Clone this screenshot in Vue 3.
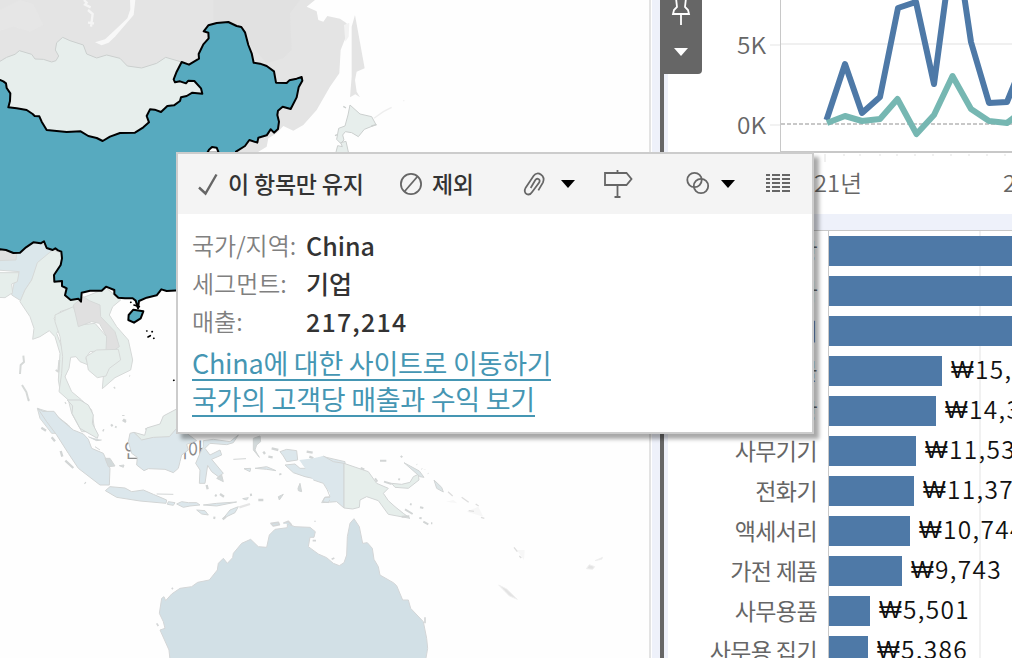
<script setup>
const rows = [
  { name: '책장', w: 220, value: '' },
  { name: '의자', w: 220, value: '' },
  { name: '복사기', w: 220, value: '' },
  { name: '테이블', w: 113, value: '15,247' },
  { name: '포장', w: 107, value: '14,312' },
  { name: '사무기기', w: 87, value: '11,532' },
  { name: '전화기', w: 85, value: '11,374' },
  { name: '액세서리', w: 81, value: '10,744' },
  { name: '가전 제품', w: 73, value: '9,743' },
  { name: '사무용품', w: 41, value: '5,501' },
  { name: '사무용 집기', w: 39, value: '5,386' }
]
const details = [
  { key: '국가/지역:', val: 'China', cls: 'd1' },
  { key: '세그먼트:', val: '기업', cls: 'd2' },
  { key: '매출:', val: '217,214', cls: 'd3' }
]
</script>

<template>
  <main class="dashboard">
    <section class="map">
      <svg width="649" height="658" viewBox="0 0 649 658">
        <!-- mainland and Sakhalin -->
        <g transform="scale(.33333)" fill="#e4e4e4">
          <path d="M0 0H945L920 20 950 34 955 60 970 65 982 48 1020 56 1040 70 1036 115 1022 150 1018 220 990 260 950 330 910 375 880 392 850 378 830 400 805 415 800 440 760 465 500 500 0 600Z" />
          <path d="M1065 45 1075 100 1094 205 1070 215 1065 240 1070 275 1080 292 1066 283 1050 292 1055 230 1055 80Z" />
          <path d="M1032 75 1048 68 1046 110 1036 125Z" fill="#f2f2f2" />
          <path d="M640 0H900L870 40 875 150 850 175 800 190 700 75 640 60Z" fill="#e1e1e1" />
          <path d="M60 0 100 12 130 75 90 95 40 80 0 92V30Z" fill="#e8e8e8" opacity=".6" />
          <path d="M390 0 406 0 401 45 345 110 326 128 305 136 285 127 315 118 345 90 382 55 391 28Z" fill="#f8f8f8" />
          <path d="M252 0 260 8 255 14 272 22M264 30 278 42 273 80M264 68 282 70" stroke="#f5f5f5" stroke-width="7" fill="none" />
          <path d="M1122 355 1150 335 1175 322M1210 302H1213" stroke="#eeeeee" stroke-width="4" fill="none" />
        </g>
        <!-- Mongolia and Japan -->
        <g transform="scale(.33333)" fill="#e7eeec" stroke="#cbcfce" stroke-width="3" stroke-linejoin="round">
          <path d="M-10 190 20 172 45 163 58 152 95 163 105 177 130 178 155 186 168 182 176 168 166 150 170 128 188 112 210 122 250 135 260 162 290 174 320 165 360 175 382 198 425 204 470 190 497 172 545 186 570 220 620 285 440 400 310 450 100 420 -10 270Z" />
          <path d="M1050 315 1080 342 1115 350 1128 374 1093 388 1075 410 1055 398 1036 395 1028 405 1032 420 1022 430 1010 418 1016 385 1035 378 1044 345Z" />
          <path d="M1013 437 1027 440 1022 428 1038 424 1046 460H1007Z" />
          <path d="M1030 319 1038 324M1005 407 1012 404M1114 378 1130 374" stroke-width="4" />
        </g>
        <!-- mainland South-East Asia -->
        <g transform="translate(0 210) scale(.33333)" stroke="#d6d9d8" stroke-width="3" stroke-linejoin="round" fill="#e6eeeb">
          <path d="M-10 130 50 130 105 95 165 115 168 135 115 160 95 210 75 240 62 272 35 255 45 205 58 185 -10 180Z" fill="#dbe7eb" />
          <path d="M-10 188 57 188 52 215 35 222 38 248 15 263 -10 262Z" />
          <path d="M-10 122 20 120 50 132 48 150 -10 152Z" fill="#e0e0e0" />
          <path d="M112 158 158 120 185 130 186 175 164 210 195 225 240 275 220 292 180 305 162 325 180 355 170 370 185 410 205 470 190 515 180 540 175 510 180 430 165 380 148 362 120 380 98 388 102 355 90 320 60 275 75 240 95 210Z" />
          <path d="M165 315 220 290 240 345 285 340 320 380 325 420 270 425 257 445 265 465 240 455 228 440 212 442 207 475 195 500 215 545 245 570 275 600 285 665H245L215 610 205 570 177 545 185 490 188 440 180 380 165 335Z" />
          <path d="M243 265 320 235 362 270 338 290 328 315 350 350 385 390 398 450 392 480 345 503 307 536 310 500 260 450 330 415 318 370 300 320Z" />
          <path d="M220 285 250 260 268 272 300 285 302 320 345 365 358 410 340 422 318 420 320 380 298 340 275 335 235 350Z" fill="#e0e0e0" />
          <path d="M258 440 290 420 355 418 362 450 328 475 318 498 292 503 265 480Z" />
          <path d="M112 595 160 610 205 645 225 670H155L120 625Z" fill="#dce7ec" />
          <path d="M435 657 480 645 495 620 515 618 530 595V665Z" />
          <path d="M70 437 72 456 62 465 60 492M66 525 79 546 86 572M178 450 175 485 167 480M388 497 390 498M342 535 345 532M370 628 378 632M345 650 350 652M195 580 198 578" stroke-width="6" fill="none" />
        </g>
        <!-- China -->
        <g transform="scale(.33333)" fill="#57aabf" stroke="#000" stroke-width="6" stroke-linejoin="round" stroke-linecap="round">
          <path d="M-20 238 0 240 10 244 18 250 20 264 31 280 30 303 25 322 50 325 80 330 98 342 104 348 118 349 125 365 140 390 200 396 242 394 265 408 290 414 308 423 330 410 360 399 405 398 430 382 447 367 440 348 450 328 464 329 483 336 502 318 522 316 540 303 543 292 560 288 577 278 607 281 603 265 583 243 565 242 558 250 540 244 525 247 521 238 530 215 545 186 567 194 597 176 596 162 610 133 626 115 625 98 611 94 625 76 650 69 685 66 710 78 724 81 735 97 745 135 755 160 761 188 780 191 800 198 822 214 828 248 860 249 868 241 890 236 905 231 907 242 896 262 890 292 872 327 848 320 834 332 832 345 837 365 834 387 822 398 812 388 800 406 775 413 772 428 748 420 735 438 708 455 750 700 540 871 500 873 484 868 470 886 440 893 417 903 414 925 407 902 398 895 375 895 355 893 343 882 343 870 318 860 305 872 270 872 245 878 243 905 235 896 212 900 195 886 200 865 186 858 186 843 163 845 162 825 182 795 186 775 184 755 174 751 166 745 158 750 140 744 132 724 122 730 100 727 78 742 60 758 40 759 18 750 0 748 -20 755Z" />
          <path d="M386 945 400 929 430 934 422 955 402 968 385 960Z" />
          <path d="M622 458 627 449 636 441 650 443 656 458Z" fill="#fff" />
          <path d="M440 993h1M456 995h1M444 1011 451 1007M461 1015h1M521 1141h1M392 907h1M402 915 418 920" stroke-width="5" fill="none" />
        </g>
        <text x="124" y="458" class="country" textLength="80" lengthAdjust="spacingAndGlyphs">인도네시아</text>
        <!-- Indonesia and Malaysia -->
        <g transform="translate(0 400) scale(.33333)" fill="#dce7ec" stroke="#d2d5d5" stroke-width="3" stroke-linejoin="round">
          <path d="M202 0 218 18 216 40 240 85 292 115 295 105 277 70 280 45 265 15 240 0Z" fill="#e6eeeb" />
          <path d="M113 25 128 34 162 34 178 55 220 90 250 102 265 118 275 145 310 160 330 205 328 255 300 255 235 205 205 160 170 105 140 65Z" />
          <path d="M316 272 330 260 375 264 395 275 430 270 460 283 500 300 498 310 420 303 350 292Z" />
          <path d="M390 100 402 97 425 118 460 110 508 108 530 75 560 100 590 122 560 133 565 150 545 165 540 185 535 205 520 218 495 208 445 206 432 212 410 195 412 172 395 160 385 125Z" />
          <path d="M402 97 434 106 440 84 480 72 490 48 530 27 530 85 508 110 460 112 425 120Z" fill="#e6eeeb" />
          <path d="M610 140 610 122 640 118 690 125 715 105 700 128 680 134 630 130 615 145 630 165 660 150 665 165 635 178 670 220 655 230 635 215 623 196 615 250H598L600 210 587 190 600 160Z" />
          <path d="M840 155 860 148 890 152 893 180 860 185 850 168Z" />
          <path d="M855 195 885 192 900 205 920 205 940 180 970 170 1035 185V310L1010 300 990 260 960 240 915 230 880 218Z" />
          <path d="M968 305 975 292 995 292 985 308Z" />
          <path d="M505 305 525 308 520 316 502 313ZM530 312 545 305 565 308 590 308 600 315 570 318 550 322ZM610 315 650 310 710 306 650 318ZM590 330 615 332 625 345 605 342ZM670 355 690 330 715 320 705 338 680 350ZM728 296 745 293 740 300ZM765 205 800 200 828 212 800 208ZM732 206 752 205 750 215ZM700 178 738 176" />
          <path d="M315 175 330 175 345 198 325 200ZM358 197 372 195 370 202ZM760 115 780 108 782 125 770 135 765 150 778 172 760 150ZM835 290 850 283 838 300ZM894 265 900 250 905 275 895 272ZM650 235 665 225 670 245ZM265 110 290 122 305 120M285 140 300 150M470 282 520 283" fill="#d3dadb" />
          <path d="M124 83 138 92M155 112 165 124M182 153 187 170M196 182 220 204M254 248 257 250M370 45V48M368 60 378 66M333 78 338 74M308 90 312 92M620 255 623 268M645 285 650 288M660 282 672 290M775 300H790M815 145 835 150M805 170 818 172M920 155 938 158M928 170 940 175M840 220 842 225M790 155 795 162M640 353 646 354M668 358 678 350M750 285 756 284M910 190 920 200M84 0H88" fill="none" stroke-width="7" />
          <path d="M718 322 750 312" stroke="#e5e5e5" stroke-width="7" />
        </g>
        <!-- Australia -->
        <g transform="translate(0 400) scale(.33333)" stroke="#d4d6d7" stroke-width="3" fill="#d2e0e6" stroke-linejoin="round">
          <path d="M510 780 507 750 480 690 495 685 490 665 478 640 485 595 492 590 497 602 515 582 540 565 575 560 593 547 628 540 652 510 655 490 670 475 682 490 698 473 700 460 725 430 752 418 775 440 800 442 808 405 825 388 862 383 862 372 885 380 930 382 946 395 942 412 930 412 925 440 955 462 980 473 1000 490 1018 497 1032 488 1040 465 1042 410 1050 370 1062 356 1078 380 1088 430 1102 428 1117 445 1122 478 1135 500 1140 525 1180 548 1190 557 1208 600 1225 600 1232 625 1270 665 1280 715 1283 745 1277 780Z" />
          <path d="M813 370 835 367 838 374 820 378ZM850 370 865 364 875 375M938 422 948 422M515 567 519 564M470 670 475 678M1275 652V670M995 478 1003 474M945 365V362" stroke-width="5" />
        </g>
        <!-- Papua New Guinea and Pacific islands -->
        <g transform="translate(320 400) scale(.33333)" stroke="#d2d5d5" stroke-width="3" stroke-linejoin="round">
          <path d="M-62 180-20 175 10 168 40 185 72 190V324L50 305 30 307 30 280 10 250-20 240Z" fill="#dce7ec" stroke="none" />
          <path d="M10 168 40 185 72 190V324L50 305 5 308 14 292 30 290 22 270 10 250-20 240" fill="none" />
          <path d="M72 190 145 215 170 250 205 265 190 280 205 302 225 320 250 340 270 355 205 343 175 302 140 290 120 300 118 322 98 327 72 324Z" fill="#e6eeeb" />
          <path d="M215 250 245 253 270 247 280 230 295 223 297 240 265 265 225 262Z" fill="#e6eeeb" />
          <path d="M342 240 365 262 370 276 350 265ZM252 188 298 213 312 232 300 230Z" fill="#dce5e7" />
          <path d="M180 182H199M242 168 247 172M290 193 291 194M305 206 306 207M314 207V208M324 220 325 221M165 235 172 245M192 245 215 252M235 237 240 239M255 328 278 342M270 312 275 314M300 322 310 324M298 354 305 355M310 365 325 373M333 370H337M122 204 133 208M245 350 268 349" fill="none" stroke-width="6" />
          <path d="M378 305 412 310 400 300ZM440 335 490 350 475 320ZM590 450 614 450 612 480ZM385 275 400 290Z" fill="#f7f7f7" stroke="none" />
          <path d="M536 555 560 567 592 598 568 588ZM799 506 808 494 824 500 818 508ZM825 482 848 472 845 478Z" fill="#e3e3e3" stroke="#f0f0f0" />
          <path d="M384 275 398 288M425 292 446 307M467 312 476 318M446 332 462 334M483 352 493 355M582 442 592 455M598 468 604 474" stroke="#dedede" stroke-width="4" />
        </g>
      </svg>
    </section>

    <div class="gutter"></div>
    <div class="selection"></div>

    <section class="charts">
      <svg class="trend" width="344" height="214" viewBox="668 0 344 214">
        <path d="M770 45H780" stroke="#f2f2f2" stroke-width="2" />
        <path d="M781 44H1012" stroke="#f0f0f0" stroke-width="2" />
        <path d="M770 125H780" stroke="#f2f2f2" stroke-width="2" />
        <path d="M781 124H1012" stroke="#c8c8c8" stroke-width="2" stroke-dasharray="4 2" />
        <path d="M780.5 0V152" stroke="#c8c8c8" />
        <path d="M780 152H1012" stroke="#c8c8c8" stroke-width="2" />
        <path d="M825 154V162M844 154v2M860 154v2M880 154v2M897 154v2M915 154v2M933 154v2M951 154v2M969 154v2M987 154v2M1005 154v2" stroke="#f0f0f0" stroke-width="2" />
        <path d="M826.500 120 845 64 862 113 880 97 898 8 916 2 934 84 948-20 961-25 971 42 989 103 1007 102 1020 70" class="line blue" />
        <path d="M827 123 845 116 862 121 880 119 897.5 99 916.5 134 934 115 952.500 76 971 109 989 121 1007 123 1020 113" class="line green" />
        <text x="737" y="54" class="axis" textLength="29" lengthAdjust="spacingAndGlyphs">5K</text>
        <text x="737" y="134" class="axis" textLength="29" lengthAdjust="spacingAndGlyphs">0K</text>
        <text x="788" y="192" class="axis" textLength="74" lengthAdjust="spacingAndGlyphs">2021년</text>
        <text x="1003" y="192" class="axis" textLength="74" lengthAdjust="spacingAndGlyphs">2022년</text>
      </svg>
      <div class="band"></div>
      <div class="bars">
        <div v-for="row in rows" :key="row.name" class="row">
          <span class="name">{{ row.name }}</span>
          <div class="plot">
            <i class="bar" :style="{ width: row.w + 'px' }"></i>
            <span v-if="row.value" class="value"><span class="won">₩</span>{{ row.value }}</span>
          </div>
        </div>
      </div>
    </section>

    <div class="tab">
      <svg width="42" height="74" viewBox="0 0 42 74" fill="none" stroke="#fff" stroke-width="1.8">
        <path d="M16-2 17 7 14 10 13 14H29L28 10 25 7 26-2M21 15V25" />
        <path d="M14 48H28L21 56Z" fill="#fff" stroke="none" />
      </svg>
    </div>

    <aside class="tooltip">
      <div class="toolbar">
        <svg class="ic check" width="24" height="28" viewBox="0 0 24 28"><path d="M3 17.500 9.500 23.500 20.500 4.500" stroke-width="2.4" /></svg>
        <span class="cmd keep">이 항목만 유지</span>
        <svg class="ic ban" width="24" height="28" viewBox="0 0 24 28"><circle cx="12" cy="14" r="10.100" /><path d="M5.500 21.500 18.500 6.500" /></svg>
        <span class="cmd drop">제외</span>
        <svg class="ic clip" width="24" height="28" viewBox="0 -3 72 84"><path d="M46 58 60 34C68 14 44-2 32 14L8 50C-2 68 18 78 28 62L49 34C53 24 42 20 37 27L23 51" stroke-width="5.200" /></svg>
        <svg class="caret" width="16" height="10" viewBox="0 0 16 10"><path d="M1 1H15L8 9Z" /></svg>
        <svg class="ic sign" width="30" height="30" viewBox="0 0 30 30"><path d="M2 4H23.500L28.500 10 23.500 16H2ZM14.500 1V4M14.500 16V28M11.500 28H17.500" /></svg>
        <svg class="ic sets" width="24" height="28" viewBox="0 0 24 28"><circle cx="8.500" cy="10" r="7.200" /><circle cx="15" cy="16" r="7.200" /></svg>
        <svg class="caret second" width="16" height="10" viewBox="0 0 16 10"><path d="M1 1H15L8 9Z" /></svg>
        <svg class="ic data" width="26" height="22" viewBox="0 0 26 22"><path d="M1 2H5M7 2H15M17 2H25M1 6H5M7 6H15M17 6H25M1 10H5M7 10H15M17 10H25M1 14H5M7 14H15M17 14H25M1 18H5M7 18H15M17 18H25" /></svg>
      </div>
      <div class="body">
        <div v-for="d in details" :key="d.key" class="detail" :class="d.cls">
          <span class="key">{{ d.key }}</span><b>{{ d.val }}</b>
        </div>
        <a class="link first">China에 대한 사이트로 이동하기</a>
        <a class="link">국가의 고객당 매출과 수익 보기</a>
      </div>
    </aside>
  </main>
</template>

<style>
body { background: #fff; }
</style>

<style scoped>
.dashboard {
  position: relative;
  display: flex;
  width: 1012px;
  height: 658px;
  overflow: hidden;
  background: #fff;
  font-family: "Noto Sans CJK KR", sans-serif;
}
.map { width: 649px; background: #fefefe; flex: none; }
.map svg { display: block; }
.country { font-size: 20px; fill: #8a8a8a; }
.gutter { width: 11px; box-sizing: border-box; border-left: 2px solid #e3e3e3; background: #eef1fa; box-shadow: inset 1px 0 #fff; flex: none; }
.selection { width: 4px; background: #666; border-right: 4px solid #eef1fa; flex: none; }
.charts { width: 344px; flex: none; display: flex; flex-direction: column; }
.trend { display: block; flex: none; }
.line { fill: none; stroke-width: 6; stroke-linejoin: round; stroke-linecap: butt; }
.blue { stroke: #4e79a7; }
.green { stroke: #76b7b2; }
.axis { font-size: 23px; fill: #666; font-weight: 350; }
.band { height: 16px; background: #eef1fa; flex: none; }
.bars {
  flex: none;
  height: 441px;
  border-top: 1px solid #c8c8c8;
  background: linear-gradient(#f1f1f1, #f1f1f1) 311px 0 / 2px 100% no-repeat,
    linear-gradient(#c8c8c8, #c8c8c8) 160px 0 / 1px 100% no-repeat;
}
.row { display: flex; height: 40px; align-items: center; }
.name { width: 149px; margin-right: 12px; padding-bottom: 2px; text-align: right; font-size: 23px; line-height: 36px; color: #666; letter-spacing: -.6px; white-space: nowrap; }
.plot { display: flex; align-items: center; width: 183px; }
.bar { height: 30px; background: #4e79a7; flex: none; }
.value { display: flex; margin-left: 9px; padding-bottom: 2px; font-size: 24.500px; line-height: 36px; letter-spacing: 1.300px; color: #111; font-weight: 350; white-space: nowrap; }
.won { width: 24px; font-family: "Liberation Sans", sans-serif; font-size: 24px; letter-spacing: 0; line-height: 38px; }
.tab { position: absolute; left: 660px; top: 0; width: 42px; height: 74px; background: #666; border-radius: 0 0 4px 0; }
.tooltip {
  position: absolute;
  left: 176px;
  top: 152px;
  width: 638px;
  height: 282px;
  box-sizing: border-box;
  border: 2px solid #ccc;
  background: #fff;
  box-shadow: 5px 5px 4px rgba(0, 0, 0, .34);
}
.toolbar { display: flex; align-items: center; height: 60px; background: #f4f4f4; }
.ic { fill: none; stroke: #666; stroke-width: 1.8; flex: none; }
.caret { fill: #000; flex: none; margin-left: 13px; }
.cmd { font-size: 23px; font-weight: 500; color: #333; white-space: nowrap; line-height: 30px; padding-bottom: 2px; }
.check { margin-left: 18px; }
.keep { width: 140px; margin-left: 8px; letter-spacing: -.2px; }
.ban { margin-left: 31px; }
.drop { width: 44px; margin-left: 9px; letter-spacing: -.5px; }
.clip { margin-left: 47px; }
.sign { margin-left: 27px; }
.sets { margin-left: 53px; }
.second { margin-left: 10px; }
.data { margin-left: 29px; stroke-width: 2; }
.body { padding: 12px 14px 0; }
.detail { display: flex; height: 38px; line-height: 38px; font-size: 24px; }
.key { width: 114px; color: #808080; letter-spacing: 0; font-weight: 350; white-space: nowrap; }
.detail b { color: #333; font-weight: 500; font-size: 25px; letter-spacing: 0; }
.d3 b { letter-spacing: 1.200px; }
.link { display: block; width: max-content; height: 36px; line-height: 36px; font-size: 27px; letter-spacing: -.25px; color: #4596b3; border-bottom: 2px solid #4596b3; white-space: nowrap; box-sizing: border-box; }
.first { margin-top: 5px; }
</style>
